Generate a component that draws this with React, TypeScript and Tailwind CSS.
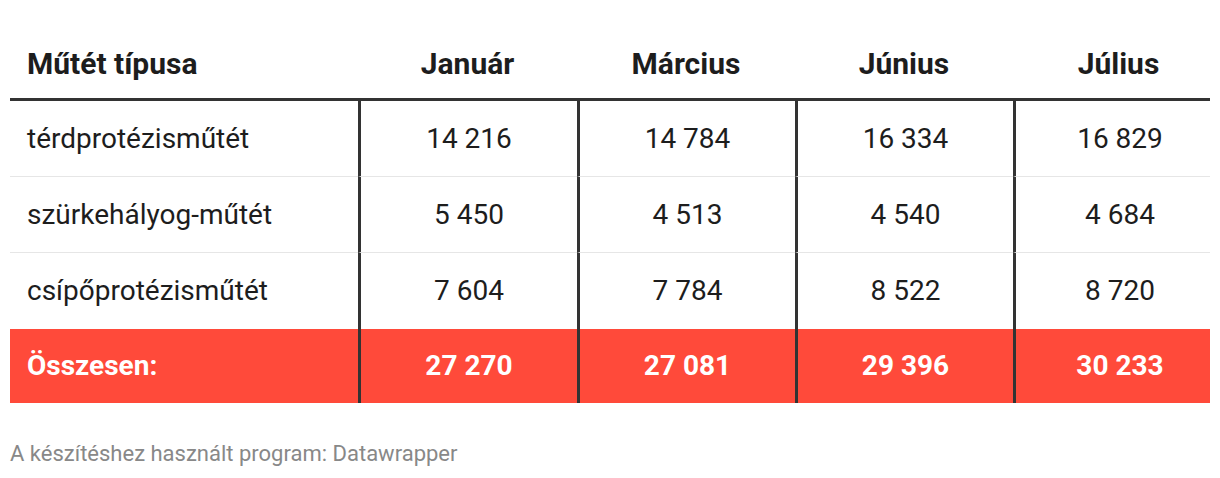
const MONTHS = ["Január", "Március", "Június", "Július"];

const ROWS: { label: string; values: string[] }[] = [
  { label: "térdprotézisműtét", values: ["14 216", "14 784", "16 334", "16 829"] },
  { label: "szürkehályog-műtét", values: ["5 450", "4 513", "4 540", "4 684"] },
  { label: "csípőprotézisműtét", values: ["7 604", "7 784", "8 522", "8 720"] },
];

const TOTAL = ["27 270", "27 081", "29 396", "30 233"];

const GRID = "grid grid-cols-[348px_219px_218px_218px_197px]";

const cellPad = (i: number) => (i === 3 ? "pl-[14px]" : "");

export default function App() {
  return (
    <div className="w-[1220px] h-[478px] bg-white px-[10px] font-['Roboto',sans-serif]">
      {/* Header */}
      <div className={`${GRID} border-b-[3px] border-[#333333] pt-[46px] pb-[16px] text-[30px] leading-[36px] font-bold text-[#1d1d1d]`}>
        <div className="pl-[17px]">Műtét típusa</div>
        {MONTHS.map((m, i) => (
          <div key={m} className={`text-center ${cellPad(i)}`}>
            {m}
          </div>
        ))}
      </div>

      {/* Body */}
      {ROWS.map((row, r) => (
        <div key={row.label} className={`${GRID} text-[28px] text-[#1d1d1d]`}>
          <div
            className={`flex h-[76px] items-center pl-[17px] ${r < ROWS.length - 1 ? "border-b border-[#e6e6e6]" : ""}`}
          >
            {row.label}
          </div>
          {row.values.map((v, i) => (
            <div
              key={i}
              className={`flex h-[76px] items-center justify-center border-l-[3px] border-l-[#333333] ${cellPad(i)} ${r < ROWS.length - 1 ? "border-b border-b-[#e6e6e6]" : ""}`}
            >
              {v}
            </div>
          ))}
        </div>
      ))}

      {/* Total */}
      <div className={`${GRID} h-[74px] bg-[#ff4a3a] text-[28px] font-bold text-white`}>
        <div className="flex items-center pl-[17px]">Összesen:</div>
        {TOTAL.map((v, i) => (
          <div
            key={i}
            className={`flex items-center justify-center border-l-[3px] border-[#333333] ${cellPad(i)}`}
          >
            {v}
          </div>
        ))}
      </div>

      <p className="mt-[38px] text-[22px] leading-[26px] text-[#888888]">
        A készítéshez használt program: Datawrapper
      </p>
    </div>
  );
}
